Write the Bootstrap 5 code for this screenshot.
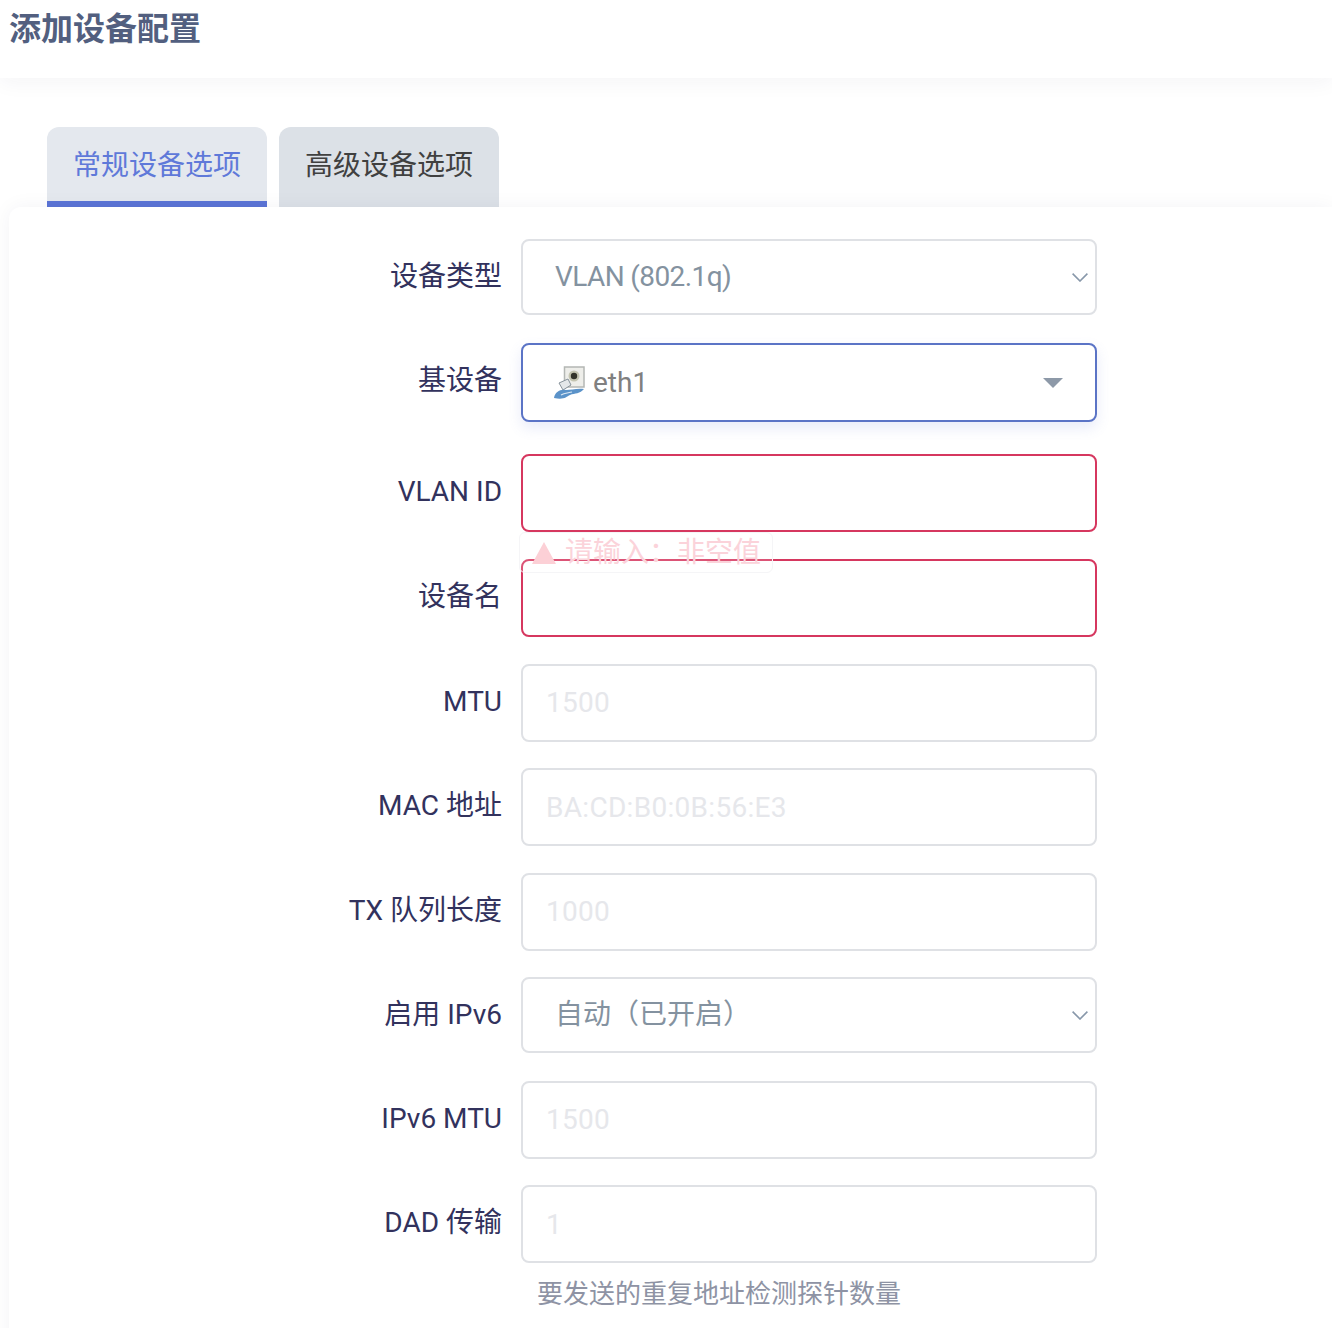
<!DOCTYPE html>
<html lang="zh-CN">
<head>
    <meta charset="UTF-8">
    <meta name="viewport" content="width=device-width, initial-scale=1.0">
    <title>添加设备配置</title>
    <link rel="stylesheet" href="https://cdn.jsdelivr.net/npm/bootstrap@5.3.0/dist/css/bootstrap.min.css">
    <style>
        html, body {
            height: 1328px;
            overflow: hidden;
        }
        body {
            background-color: #fff;
            font-family: Roboto, "Noto Sans CJK SC", sans-serif;
            color: #32325d;
        }
        .page-head {
            height: 78px;
            padding: 7px 0 0 9px;
            background-color: #fff;
            box-shadow: 0 4px 20px rgba(30, 40, 70, .05);
            position: relative;
        }
        .page-head h2 {
            margin: 0;
            font-size: 32px;
            line-height: 44px;
            font-weight: 700;
            color: #525f7f;
        }
        .tab-strip {
            padding: 49px 0 0 47px;
            gap: 12px;
        }
        .tab-item {
            width: 220px;
            height: 80px;
            padding-top: 18px;
            text-align: center;
            font-size: 28px;
            line-height: 42px;
            color: #404040;
            background-color: #dce1e7;
            border-radius: 12px 12px 0 0;
        }
        .tab-item.on {
            color: #5f79d9;
            background-color: #e4e8ee;
            border-bottom: 6px solid #5b74d6;
        }
        .form-panel {
            margin-left: 9px;
            padding-top: 32px;
            height: 1200px;
            background-color: #fff;
            border-radius: 12px 0 0 0;
            box-shadow: 0 0 20px rgba(30, 40, 70, .05);
            position: relative;
        }
        .field-row {
            gap: 19px;
            margin-bottom: 26.6px;
        }
        .field-row.sel-row {
            margin-bottom: 28px;
        }
        .field-row.sel-row.sel-low {
            margin-bottom: 27.2px;
        }
        .field-row.base-row {
            margin-bottom: 32.4px;
        }
        .field-label {
            width: 493px;
            height: 76px;
            font-size: 28px;
            color: #32325d;
        }
        .field-box {
            width: 576px;
            position: relative;
        }
        .field-input.form-control {
            height: 78px;
            padding: 0 23px;
            font-size: 28px;
            letter-spacing: .3px;
            border: 2px solid #dfe1e5;
            border-radius: 8px;
            color: #525f7f;
        }
        .field-input.form-control::placeholder {
            color: #e6e7eb;
        }
        .field-input.bad.form-control {
            border-color: #d6375f;
        }
        .field-select.form-select {
            height: 76px;
            padding: 0 0 0 32px;
            font-size: 28px;
            color: #8492a0;
            border: 2px solid #dfe1e5;
            border-radius: 8px;
            background-image: url("data:image/svg+xml,%3csvg xmlns='http://www.w3.org/2000/svg' viewBox='0 0 16 9'%3e%3cpath fill='none' stroke='%238898aa' stroke-width='1.6' d='M.6.6 8 8l7.4-7.4'/%3e%3c/svg%3e");
            background-size: 16px 9px;
            background-position: right 7px center;
        }
        .field-select.tight-text {
            letter-spacing: -.6px;
        }
        .base-pick {
            height: 79px;
            padding: 0 32px 0 31px;
            font-size: 28px;
            color: #808080;
            background-color: #fff;
            border: 2px solid #5b74c6;
            border-radius: 8px;
            box-shadow: 0 6px 14px rgba(91, 116, 214, .14);
        }
        .base-caret {
            width: 0;
            height: 0;
            border-left: 10px solid transparent;
            border-right: 10px solid transparent;
            border-top: 10px solid #8d99a8;
        }
        .tip-bubble {
            position: absolute;
            left: -2px;
            top: 78px;
            width: 254px;
            height: 41px;
            padding: 0 0 0 12px;
            gap: 9px;
            font-size: 28px;
            line-height: 36px;
            color: #fbd3da;
            background-color: rgba(255, 255, 255, .15);
            border: 1px solid #f5f5f7;
            border-radius: 6px;
            z-index: 2;
        }
        .tip-mark {
            width: 0;
            height: 0;
            border-left: 12px solid transparent;
            border-right: 12px solid transparent;
            border-bottom: 22px solid #fcd0d6;
        }
        .field-hint {
            margin-top: 13px;
            padding-left: 16px;
            font-size: 26px;
            line-height: 36px;
            color: #8e93a4;
        }
    </style>
</head>
<body>
    <div class="page-head">
        <h2>添加设备配置</h2>
    </div>

    <!-- Tabs -->
    <div class="tab-strip d-flex">
        <div class="tab-item on">常规设备选项</div>
        <div class="tab-item">高级设备选项</div>
    </div>

    <div class="form-panel">
        <div class="field-row sel-row d-flex">
            <label class="field-label d-flex align-items-center justify-content-end">设备类型</label>
            <div class="field-box">
                <select class="field-select tight-text form-select"><option>VLAN (802.1q)</option></select>
            </div>
        </div>

        <div class="field-row base-row d-flex">
            <label class="field-label d-flex align-items-center justify-content-end">基设备</label>
            <div class="field-box">
                <div class="base-pick d-flex align-items-center">
                    <!-- network port icon -->
                    <svg width="31" height="34" viewBox="0 0 31 34" class="me-2 flex-shrink-0">
                        <rect x="10.5" y="1" width="19.5" height="20" fill="#eeeeea" stroke="#b4b7b4" stroke-width="1.5"/>
                        <circle cx="20" cy="10" r="5.5" fill="#c4c4b0"/>
                        <circle cx="20" cy="10" r="3.2" fill="#34342a"/>
                        <path d="M5 17l9-4 3 6-8 5z" fill="#e4e7e9" stroke="#87929b"/>
                        <path d="M0 32c1-6 6-9 12-8 5 0 11-2 18-1-4 5-9 4-14 6-4 2-6 5-16 3z" fill="#5b93c9"/>
                        <path d="M7 29c3-2 7-2 11-3" fill="none" stroke="#dbe8f3" stroke-width="1.2"/>
                    </svg>
                    <span class="flex-grow-1">eth1</span>
                    <span class="base-caret"></span>
                </div>
            </div>
        </div>

        <div class="field-row d-flex">
            <label class="field-label d-flex align-items-center justify-content-end">VLAN ID</label>
            <div class="field-box">
                <input type="text" class="field-input bad form-control">
                <div class="tip-bubble d-flex align-items-center">
                    <span class="tip-mark"></span>
                    <span>请输入：非空值</span>
                </div>
            </div>
        </div>

        <div class="field-row d-flex">
            <label class="field-label d-flex align-items-center justify-content-end">设备名</label>
            <div class="field-box"><input type="text" class="field-input bad form-control"></div>
        </div>

        <div class="field-row d-flex">
            <label class="field-label d-flex align-items-center justify-content-end">MTU</label>
            <div class="field-box"><input type="text" class="field-input form-control" placeholder="1500"></div>
        </div>

        <div class="field-row d-flex">
            <label class="field-label d-flex align-items-center justify-content-end">MAC 地址</label>
            <div class="field-box"><input type="text" class="field-input form-control" placeholder="BA:CD:B0:0B:56:E3"></div>
        </div>

        <div class="field-row d-flex">
            <label class="field-label d-flex align-items-center justify-content-end">TX 队列长度</label>
            <div class="field-box"><input type="text" class="field-input form-control" placeholder="1000"></div>
        </div>

        <div class="field-row sel-row sel-low d-flex">
            <label class="field-label d-flex align-items-center justify-content-end">启用 IPv6</label>
            <div class="field-box">
                <select class="field-select form-select"><option>自动（已开启）</option></select>
            </div>
        </div>

        <div class="field-row d-flex">
            <label class="field-label d-flex align-items-center justify-content-end">IPv6 MTU</label>
            <div class="field-box"><input type="text" class="field-input form-control" placeholder="1500"></div>
        </div>

        <div class="field-row d-flex">
            <label class="field-label d-flex align-items-center justify-content-end">DAD 传输</label>
            <div class="field-box">
                <input type="text" class="field-input form-control" placeholder="1">
                <div class="field-hint">要发送的重复地址检测探针数量</div>
            </div>
        </div>
    </div>

    <script src="https://cdn.jsdelivr.net/npm/bootstrap@5.3.0/dist/js/bootstrap.bundle.min.js"></script>
</body>
</html>
